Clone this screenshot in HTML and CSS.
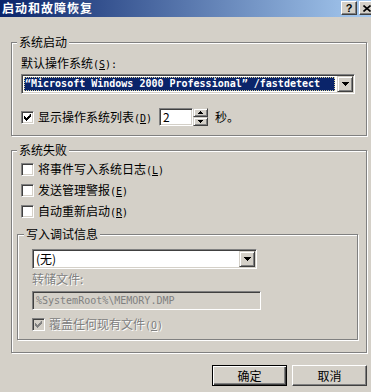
FILE: index.html
```html
<!DOCTYPE html>
<html lang="zh-CN">
<head>
  <meta charset="UTF-8">
  <title>启动和故障恢复</title>
  <link rel="stylesheet" href="styles.css">
</head>
<body>
  <div class="titlebar">
    <span class="title">启动和故障恢复</span>
    <div class="caption-btns">
      <span class="cap-btn">?</span>
      <span class="cap-btn">
        <svg width="8" height="7" viewBox="0 0 8 7"><path d="M0.5 0.5L7.5 6.5M7.5 0.5L0.5 6.5" stroke="#000" stroke-width="1.6"/></svg>
      </span>
    </div>
  </div>

  <div class="content">
    <!-- 系统启动 -->
    <div class="group g1">
      <div class="legend">系统启动</div>
      <div class="label">默认操作系统<span class="hk">(<u>S</u>):</span></div>
      <div class="combo combo-os">
        <div class="combo-value selected"><span>“Microsoft Windows 2000 Professional” /fastdetect</span></div>
        <span class="combo-btn"><svg width="7" height="4" viewBox="0 0 7 4"><path d="M0 0h7v1h-1v1h-1v1h-1v1h-1v-1h-1v-1h-1v-1h-1z"/></svg></span>
      </div>
      <div class="row">
        <span class="check">
          <svg width="7" height="7" viewBox="0 0 7 7"><path d="M6 0h1v3h-1v1h-1v1h-1v1h-1v1h-1v-1h-1v-1h-1v-3h1v1h1v1h1v-1h1v-1h1z"/></svg>
        </span>
        <span>显示操作系统列表<span class="hk">(<u>D</u>)</span></span>
        <div class="spin">
          <span class="spin-edit">2</span>
          <span class="spin-btns">
            <span class="spin-btn"><svg width="5" height="3" viewBox="0 0 5 3"><path d="M2 0h1v1h1v1h1v1h-5v-1h1v-1h1z"/></svg></span>
            <span class="spin-btn"><svg width="5" height="3" viewBox="0 0 5 3"><path d="M0 0h5v1h-1v1h-1v1h-1v-1h-1v-1h-1z"/></svg></span>
          </span>
        </div>
        <span class="unit">秒。</span>
      </div>
    </div>

    <!-- 系统失败 -->
    <div class="group g2">
      <div class="legend">系统失败</div>
      <div class="check-row first">
        <span class="check unchecked"></span>
        <span>将事件写入系统日志<span class="hk">(<u>L</u>)</span></span>
      </div>
      <div class="check-row">
        <span class="check unchecked"></span>
        <span>发送管理警报<span class="hk">(<u>E</u>)</span></span>
      </div>
      <div class="check-row">
        <span class="check unchecked"></span>
        <span>自动重新启动<span class="hk">(<u>R</u>)</span></span>
      </div>

      <div class="group g3">
        <div class="legend">写入调试信息</div>
        <div class="combo combo-debug">
          <div class="combo-value">(无)</div>
          <span class="combo-btn"><svg width="7" height="4" viewBox="0 0 7 4"><path d="M0 0h7v1h-1v1h-1v1h-1v1h-1v-1h-1v-1h-1v-1h-1z"/></svg></span>
        </div>
        <div class="label disabled dump-label">转储文件:</div>
        <div class="textbox">%SystemRoot%\MEMORY.DMP</div>
        <div class="check-row overwrite">
          <span class="check disabled-check">
            <svg width="7" height="7" viewBox="0 0 7 7"><path d="M6 0h1v3h-1v1h-1v1h-1v1h-1v1h-1v-1h-1v-1h-1v-3h1v1h1v1h1v-1h1v-1h1z"/></svg>
          </span>
          <span class="disabled">覆盖任何现有文件<span class="hk">(<u>O</u>)</span></span>
        </div>
      </div>
    </div>

    <div class="buttons">
      <span class="btn default">确定</span>
      <span class="btn">取消</span>
    </div>
  </div>
</body>
</html>
```

FILE: styles.css
```css
* {
  box-sizing: border-box;
}
body {
  margin: 0;
  width: 371px;
  height: 392px;
  overflow: hidden;
  background: #d4d0c8;
  font-family: "Noto Sans CJK SC", sans-serif;
  font-size: 12px;
  line-height: 14px;
  color: #000;
}

/* title bar */
.titlebar {
  height: 17px;
  display: flex;
  justify-content: space-between;
  background: linear-gradient(to right, #0a246a, #a6caf0);
  padding-left: 2px;
}
.title {
  color: #fff;
  font-weight: bold;
  letter-spacing: 1px;
  line-height: 16px;
}
.caption-btns {
  display: flex;
  gap: 2px;
  margin-top: 1px;
  margin-right: -4px;
}
.cap-btn {
  width: 16px;
  height: 14px;
  display: flex;
  align-items: center;
  justify-content: center;
  background: #d4d0c8;
  border: 1px solid;
  border-color: #fff #404040 #404040 #fff;
  box-shadow: inset -1px -1px #808080;
  font: bold 11px "Liberation Sans", sans-serif;
}

.content {
  padding: 25px 4px 0 11px;
}

/* etched group boxes */
.group {
  border: 1px solid #808080;
  box-shadow: inset 1px 1px #fff, 1px 1px #fff;
}
.legend {
  width: fit-content;
  height: 14px;
  margin: -8px 0 0 -4px;
  padding: 0 2px;
  background: #d4d0c8;
}
.label {
  height: 14px;
}
.g1 {
  padding: 0 11px 8px 9px;
}
.g1 .label {
  margin-top: 7px;
}
.g2 {
  margin-top: 14px;
  padding: 0 10px 12px 9px;
}
.g3 {
  margin: 15px -2px 0 -4px;
  padding: 0 10px 7px 14px;
}
.g3 .legend {
  margin-left: -8px;
}

.hk {
  font-family: "DejaVu Sans Mono", monospace;
  font-size: 10px;
  line-height: 10px;
}

/* sunken controls */
.combo,
.check,
.spin-edit,
.textbox {
  border: 1px solid;
  border-color: #808080 #fff #fff #808080;
  box-shadow: inset 1px 1px #404040, inset -1px -1px #d4d0c8;
}
.combo {
  display: flex;
  height: 20px;
  padding: 1px;
  background: #fff;
}
.combo-os {
  margin-top: 4px;
}
.combo-debug {
  margin-top: 8px;
  width: 225px;
}
.combo-value {
  flex: 1;
  margin: 1px 2px 1px 1px;
  padding-left: 1px;
  display: flex;
  align-items: center;
  white-space: nowrap;
}
.combo-value.selected {
  overflow: hidden;
  background: #0a246a;
  color: #fff;
  outline: 1px dotted #d8d09a;
  outline-offset: -1px;
  font-family: "DejaVu Sans Mono", monospace;
  font-size: 10px;
  font-weight: bold;
}
.combo-btn,
.spin-btn,
.btn {
  background: #d4d0c8;
  border: 1px solid;
  border-color: #d4d0c8 #404040 #404040 #d4d0c8;
  box-shadow: inset 1px 1px #fff, inset -1px -1px #808080;
}
.combo-btn {
  width: 16px;
  flex: none;
  display: flex;
  align-items: center;
  justify-content: center;
}

.row {
  display: flex;
  align-items: center;
  height: 20px;
  margin-top: 13px;
}
.check {
  width: 13px;
  height: 13px;
  flex: none;
  margin-right: 4px;
  background: #fff;
  display: flex;
  align-items: center;
  justify-content: center;
}
.disabled-check {
  background: #d4d0c8;
  fill: #808080;
}
.spin {
  display: flex;
  height: 18px;
  margin-left: 7px;
}
.spin-edit {
  width: 34px;
  background: #fff;
  padding: 1px 3px;
  line-height: 14px;
}
.spin-btns {
  display: flex;
  flex-direction: column;
  width: 15px;
}
.spin-btn {
  height: 9px;
  display: flex;
  align-items: center;
  justify-content: center;
}
.unit {
  margin-left: 7px;
}

.check-row {
  display: flex;
  align-items: center;
  height: 16px;
  margin-top: 5px;
}
.check-row.first {
  margin-top: 4px;
}
.check-row.overwrite {
  margin-top: 6px;
}

.disabled {
  color: #808080;
  text-shadow: 1px 1px #fff;
}
.dump-label {
  margin-top: 3px;
}
.textbox {
  width: 229px;
  height: 19px;
  margin-top: 5px;
  padding: 2px 3px;
  color: #808080;
  font-family: "DejaVu Sans Mono", monospace;
  font-size: 10px;
  line-height: 13px;
}

/* dialog buttons */
.buttons {
  display: flex;
  justify-content: flex-end;
  gap: 5px;
  margin-top: 12px;
}
.btn {
  width: 75px;
  height: 21px;
  display: flex;
  align-items: center;
  justify-content: center;
  border-color: #fff #404040 #404040 #fff;
  box-shadow: inset -1px -1px #808080;
}
.btn.default {
  border-color: #000;
  box-shadow: inset 1px 1px #fff, inset -1px -1px #404040, inset -2px -2px #808080;
}
```
